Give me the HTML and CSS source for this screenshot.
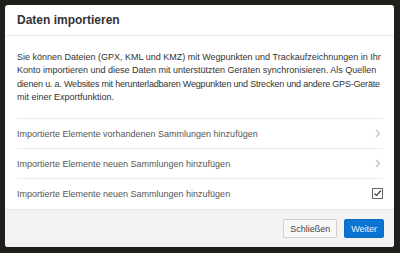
FILE: index.html
```html
<!DOCTYPE html>
<html lang="de">
<head>
<meta charset="utf-8">
<link rel="stylesheet" href="styles.css">
</head>
<body>
<div class="modal">
  <div class="modal-header">
    <h1 class="modal-title">Daten importieren</h1>
  </div>
  <div class="modal-body">
    <p class="intro">Sie können Dateien (GPX, KML und KMZ) mit Wegpunkten und Trackaufzeichnungen in Ihr<br>Konto importieren und diese Daten mit unterstützten Geräten synchronisieren. Als Quellen<br><span class="tight">dienen u. a. Websites mit herunterladbaren Wegpunkten und Strecken und andere GPS-Geräte</span><br>mit einer Exportfunktion.</p>
    <ul class="options">
      <li class="option">
        <span>Importierte Elemente vorhandenen Sammlungen hinzufügen</span>
        <svg class="chev" width="6" height="9" viewBox="0 0 6 9"><path d="M1 1 L4.5 4.5 L1 8" fill="none" stroke="#c4c4c4" stroke-width="1.4"/></svg>
      </li>
      <li class="option">
        <span>Importierte Elemente neuen Sammlungen hinzufügen</span>
        <svg class="chev" width="6" height="9" viewBox="0 0 6 9"><path d="M1 1 L4.5 4.5 L1 8" fill="none" stroke="#c4c4c4" stroke-width="1.4"/></svg>
      </li>
      <li class="option">
        <span>Importierte Elemente neuen Sammlungen hinzufügen</span>
        <svg class="check" width="11" height="11" viewBox="0 0 11 11"><rect x="0.5" y="0.5" width="10" height="10" fill="#fff" stroke="#666"/><path d="M2.5 5.5 L4.5 7.5 L9 2.5" fill="none" stroke="#444" stroke-width="1.2"/></svg>
      </li>
    </ul>
  </div>
  <div class="modal-footer">
    <button class="btn btn-default">Schließen</button>
    <button class="btn btn-primary">Weiter</button>
  </div>
</div>
</body>
</html>
```

FILE: styles.css
```css
html, body {
  margin: 0;
  padding: 0;
}
body {
  width: 400px;
  height: 253px;
  background: #1f1f1c;
  font-family: "Liberation Sans", Arial, sans-serif;
  padding: 5px 6px 6px 5px;
  box-sizing: border-box;
}
.modal {
  background: #fff;
  border-radius: 3px;
  height: 242px;
  display: flex;
  flex-direction: column;
  overflow: hidden;
}
.modal-header {
  height: 30px;
  border-bottom: 1px solid #ececec;
  padding: 0 12px;
  display: flex;
  align-items: center;
  flex-shrink: 0;
}
.modal-title {
  margin: 0;
  font-size: 12px;
  font-weight: bold;
  color: #333;
}
.modal-body {
  padding: 15px 11px 0 12px;
  flex: 1;
}
.intro {
  margin: 0 -8px 0 0;
  font-size: 9px;
  line-height: 13.3px;
  color: #333;
  white-space: nowrap;
}
.tight {
  letter-spacing: -0.2px;
}
.options {
  list-style: none;
  margin: 14px 0 0 0;
  padding: 0;
}
.option {
  height: 30px;
  border-top: 1px solid #ececec;
  display: flex;
  align-items: center;
  justify-content: space-between;
  font-size: 9px;
  color: #555;
  box-sizing: border-box;
}
.chev {
  margin-right: 2px;
}
.check {
  margin-right: 0;
}
.modal-footer {
  height: 38px;
  background: #f3f3f3;
  border-top: 1px solid #e6e6e6;
  display: flex;
  align-items: center;
  justify-content: flex-end;
  gap: 7px;
  padding: 0 10px;
  box-sizing: border-box;
  flex-shrink: 0;
}
.btn {
  font-family: "Liberation Sans", Arial, sans-serif;
  font-size: 9px;
  height: 19px;
  padding: 0 6px;
  border-radius: 2px;
  cursor: pointer;
}
.btn-default {
  background: #f8f8f8;
  border: 1px solid #cfcfcf;
  color: #444;
}
.btn-primary {
  background: #0b74d2;
  border: 1px solid #0b6cc4;
  color: #e9f2fb;
}
```
